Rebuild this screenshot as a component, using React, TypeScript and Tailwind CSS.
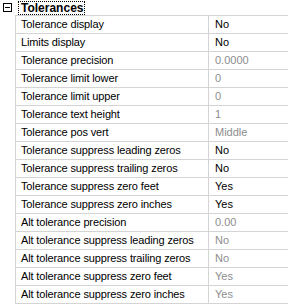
import React from "react";

type Row = { label: string; value: string; disabled?: boolean };

const rows: Row[] = [
  { label: "Tolerance display", value: "No" },
  { label: "Limits display", value: "No" },
  { label: "Tolerance precision", value: "0.0000", disabled: true },
  { label: "Tolerance limit lower", value: "0", disabled: true },
  { label: "Tolerance limit upper", value: "0", disabled: true },
  { label: "Tolerance text height", value: "1", disabled: true },
  { label: "Tolerance pos vert", value: "Middle", disabled: true },
  { label: "Tolerance suppress leading zeros", value: "No" },
  { label: "Tolerance suppress trailing zeros", value: "No" },
  { label: "Tolerance suppress zero feet", value: "Yes" },
  { label: "Tolerance suppress zero inches", value: "Yes" },
  { label: "Alt tolerance precision", value: "0.00", disabled: true },
  { label: "Alt tolerance suppress leading zeros", value: "No", disabled: true },
  { label: "Alt tolerance suppress trailing zeros", value: "No", disabled: true },
  { label: "Alt tolerance suppress zero feet", value: "Yes", disabled: true },
  { label: "Alt tolerance suppress zero inches", value: "Yes", disabled: true },
];

export default function App() {
  return (
    <div
      className="w-[288px] h-[307px] bg-white overflow-hidden text-[11px] text-black"
      style={{ fontFamily: "Tahoma, 'Liberation Sans', Arial, sans-serif" }}
    >
      {/* Category header */}
      <div className="flex items-center h-[15px]">
        <div className="ml-[3px] w-[9px] h-[9px] border border-black flex items-center justify-center">
          <div className="w-[5px] h-px bg-black" />
        </div>
        <div className="ml-[6px] h-[14px] border border-dotted border-black pl-[2px] pr-px flex items-center font-bold text-[12px] leading-none">
          Tolerances
        </div>
      </div>

      {/* Property rows */}
      <div className="ml-[15px] border-t border-[#d4d4d4]">
        {rows.map((r) => (
          <div key={r.label} className="flex h-[18px] border-b border-[#d4d4d4]">
            <div className="w-[194px] shrink-0 border-l border-r border-[#d4d4d4] pl-[5px] flex items-center whitespace-nowrap tracking-[-0.13px]">
              {r.label}
            </div>
            <div
              className={`flex-1 pl-[6px] flex items-center ${
                r.disabled ? "text-[#8d8d8d]" : "text-black"
              }`}
            >
              {r.value}
            </div>
          </div>
        ))}
      </div>
    </div>
  );
}
